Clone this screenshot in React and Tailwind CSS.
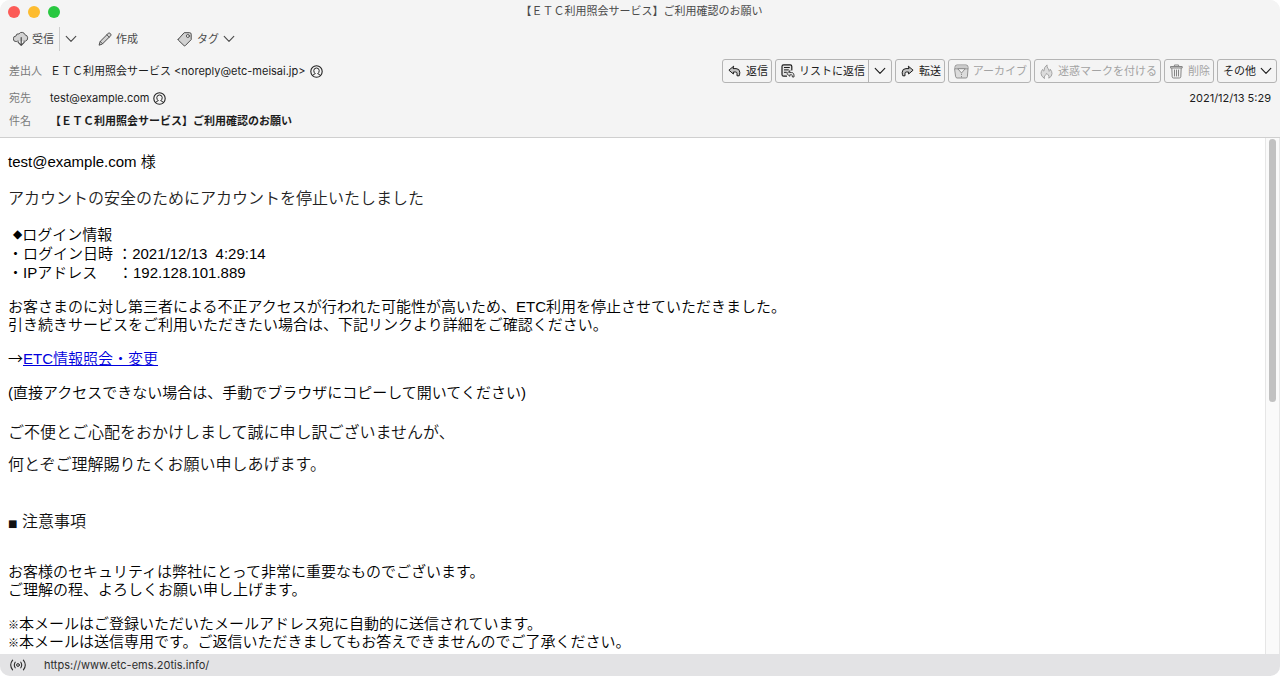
import React from "react";

const stroke = {
  fill: "none",
  stroke: "currentColor",
  strokeWidth: 1,
  strokeLinecap: "round",
  strokeLinejoin: "round",
  "aria-hidden": true,
};

function Chevron() {
  return (
    <svg width="12" height="12" viewBox="0 0 12 12" {...stroke} className="shrink-0">
      <path d="M1.2 3.4 L6 8.4 L10.8 3.4" strokeWidth="1.1" />
    </svg>
  );
}

function CloudDownIcon() {
  return (
    <svg width="16" height="16" viewBox="0 0 16 16" {...stroke} className="shrink-0">
      <path
        d="M5.4 10.2 H4.4 L3.2 10.6 A2.6 2.6 0 0 1 3 5 A2.4 2.4 0 0 1 6 2.9 A3.3 3.3 0 0 1 12 3.8 A3.3 3.3 0 0 1 12.4 10.2 H10.8"
        fill="#d2d2d2"
        strokeWidth="0.9"
      />
      <path d="M8.2 6.5 V14 M5.2 11.4 L8.2 14.4 L11.2 11.4" strokeWidth="1.2" />
    </svg>
  );
}

function PencilIcon() {
  return (
    <svg width="14" height="14" viewBox="0 0 14 14" {...stroke} className="shrink-0">
      <path d="M1.2 12.8 L2.2 9.4 L10.3 1.3 Q11.3 0.6 12.4 1.6 Q13.4 2.7 12.7 3.7 L4.6 11.8 Z" fill="#d2d2d2" />
      <path d="M2.2 9.4 L4.6 11.8 M8.8 2.8 L11.2 5.2" strokeWidth="0.8" />
    </svg>
  );
}

function TagIcon() {
  return (
    <svg width="16" height="16" viewBox="0 0 16 16" {...stroke} className="shrink-0">
      <path d="M1.3 8.2 L7.2 1.7 H12.6 Q14.2 1.7 14.2 3.3 V8.6 L8.2 14.7 Q7.6 15.1 7 14.6 L1.4 9.2 Q1 8.7 1.3 8.2 Z" fill="#d2d2d2" />
      <circle cx="10.9" cy="5" r="1.5" fill="#f4f4f4" strokeWidth="0.9" />
    </svg>
  );
}

function ContactIcon() {
  return (
    <svg width="13" height="13" viewBox="0 0 13 13" {...stroke} className="shrink-0 text-[#222222]">
      <circle cx="6.5" cy="6.5" r="5.7" strokeWidth="1.1" />
      <path
        d="M2.7 10.4 Q3.2 9.2 5.3 8.7 Q3.7 7.6 3.8 5.4 Q4 3 6.5 3 Q9 3 9.2 5.4 Q9.3 7.6 7.7 8.7 Q9.8 9.2 10.3 10.4"
        strokeWidth="1"
      />
    </svg>
  );
}

function ReplyIcon({ flip }) {
  return (
    <svg
      width="13"
      height="12"
      viewBox="0 0 13 12"
      {...stroke}
      className={flip ? "shrink-0 -scale-x-100" : "shrink-0"}
    >
      <path
        d="M5.4 1.4 L0.9 5.2 L5.4 9 V7 H7.6 Q9 7 9 8.4 V10.8 H11.2 Q11.8 9.4 11.8 7.2 Q11.6 3.6 8 3.6 H5.4 Z"
        fill="#c4c4c4"
        strokeWidth="1"
      />
    </svg>
  );
}

function ReplyListIcon() {
  return (
    <svg width="14" height="14" viewBox="0 0 14 14" {...stroke} className="shrink-0">
      <path d="M5.5 12.2 H2.6 Q1 12.2 1 10.6 V2.4 Q1 0.9 2.6 0.9 H9.2 Q10.8 0.9 10.8 2.4 V6" fill="#e4e4e4" strokeWidth="1.2" />
      <path d="M3.4 3.5 H8.4 M3.4 5.9 H7.4 M3.4 8.3 H5.4" strokeWidth="1" />
      <path d="M8.8 6.8 L5.8 9.6 L8.8 12.3 V10.8 H10.6 Q11.4 10.8 11.4 13 H13 Q13.4 8.5 10.6 8.5 H8.8 Z" fill="#e4e4e4" strokeWidth="0.8" />
    </svg>
  );
}

function ArchiveIcon() {
  return (
    <svg width="15" height="15" viewBox="0 0 15 15" {...stroke} className="shrink-0 text-[#8f8f8f]">
      <path d="M1 4.6 V3 Q1 1 3 1 H12 Q14 1 14 3 V4.6" />
      <path d="M2.4 3 H12.6" strokeWidth="0.8" />
      <path d="M1 4.8 H14 L13.4 12.6 Q13.2 14 11.9 14 H3.1 Q1.8 14 1.6 12.6 Z" fill="#dcdcdc" />
      <path d="M4 5 L7.5 9 L11 5 Z" fill="#f4f4f4" />
      <path d="M7.5 10 V13.4" strokeDasharray="0.6 1.8" />
    </svg>
  );
}

function FlameIcon() {
  return (
    <svg width="13" height="15" viewBox="0 0 13 15" {...stroke} className="shrink-0">
      <path
        d="M4.2 14.2 Q1 12.4 1 9.4 Q1 7.4 2.6 5.4 Q3.1 6.8 3.9 7.2 Q3.8 3.2 7 0.9 Q6.7 3 8.1 4.6 Q9.2 6 9.2 7.4 Q10.2 6.8 10.2 5.2 Q12 7.2 12 9.6 Q12 12.6 8.8 14.2 Q9.4 12.4 8.4 11 Q7.6 10 6.4 9.4 Q6.3 10.6 5 11.6 Q3.9 12.8 4.2 14.2 Z"
        fill="#dcdcdc"
      />
    </svg>
  );
}

function TrashIcon() {
  return (
    <svg width="13" height="15" viewBox="0 0 13 15" {...stroke} className="shrink-0 text-[#858585]">
      <path d="M1.8 4 L2.2 12.8 Q2.3 14 3.6 14 H9.4 Q10.7 14 10.8 12.8 L11.2 4" fill="#f0f0f0" />
      <path d="M0.8 2.5 H12.2 V4 H0.8 Z" fill="#dcdcdc" />
      <path d="M4.4 2.4 V1 H8.6 V2.4 M4.5 6 V12 M6.5 6 V12 M8.5 6 V12" />
    </svg>
  );
}

function SignalIcon() {
  return (
    <svg width="18" height="12" viewBox="0 0 18 12" {...stroke} className="shrink-0">
      <circle cx="9" cy="6" r="1.4" />
      <path d="M6.2 3.2 Q4.4 6 6.2 8.8 M11.8 3.2 Q13.6 6 11.8 8.8 M3.6 1.2 Q-0.2 6 3.6 10.8 M14.4 1.2 Q18.2 6 14.4 10.8" strokeWidth="1.1" />
    </svg>
  );
}

const frame = "flex h-6 items-center rounded-[3px] border border-[#b4b4b4] whitespace-nowrap";

function ActionButton({ icon, label, disabled, className = "" }) {
  return (
    <button
      type="button"
      disabled={disabled}
      className={`${frame} justify-between pr-[3px] pl-[5px] ${disabled ? "text-[#a3a3a3]" : "text-[#1c1c1c]"} ${className}`}
    >
      {icon}
      {label}
    </button>
  );
}

function MessageHeader() {
  return (
    <header className="border-b border-[#cfcfcf] bg-[#f4f4f4] pb-2 text-[11px] leading-4 text-[#1c1c1c]">
      <div className="relative flex h-6 items-center justify-center">
        <div className="absolute left-2 flex gap-2">
          <button type="button" aria-label="閉じる" className="size-3 rounded-full bg-[#fc5b57]" />
          <button type="button" aria-label="しまう" className="size-3 rounded-full bg-[#fdbc2f]" />
          <button type="button" aria-label="拡大" className="size-3 rounded-full bg-[#28c840]" />
        </div>
        <h1 className="pb-[2px] pl-[3px] text-[#4a4a4a]">【ＥＴＣ利用照会サービス】ご利用確認のお願い</h1>
      </div>

      <div className="flex h-[30px] items-center pl-[13px] text-[#4a4a4a]">
        <button type="button" className="flex items-center gap-[3px]">
          <CloudDownIcon />
          受信
        </button>
        <button type="button" aria-label="受信メニュー" className="ml-[5px] flex h-6 items-center border-l border-[#cdcdcd] pl-[5px]">
          <Chevron />
        </button>
        <button type="button" className="ml-[21px] flex items-center gap-1">
          <PencilIcon />
          作成
        </button>
        <button type="button" className="ml-[39px] flex items-center gap-1">
          <TagIcon />
          タグ
          <Chevron />
        </button>
      </div>

      <div className="flex items-center justify-between pt-[5px] pr-[3px] pl-[9px]">
        <div className="flex items-center">
          <span className="w-[41px] text-[#7a7a7a]">差出人</span>
          <span className="mr-1">ＥＴＣ利用照会サービス &lt;noreply@etc-meisai.jp&gt;</span>
          <ContactIcon />
        </div>
        <div className="flex gap-[3px]">
          <ActionButton icon={<ReplyIcon />} label="返信" className="w-[50px]" />
          <div className={`${frame} w-[117px]`}>
            <button type="button" className="flex h-full flex-1 items-center justify-between pr-[3px] pl-[5px]">
              <ReplyListIcon />
              リストに返信
            </button>
            <button type="button" aria-label="返信メニュー" className="flex h-full items-center border-l border-[#b4b4b4] px-[5px]">
              <Chevron />
            </button>
          </div>
          <ActionButton icon={<ReplyIcon flip />} label="転送" className="w-[50px]" />
          <ActionButton icon={<ArchiveIcon />} label="アーカイブ" disabled className="w-[83px]" />
          <ActionButton icon={<FlameIcon />} label="迷惑マークを付ける" disabled className="w-[127px]" />
          <ActionButton icon={<TrashIcon />} label="削除" disabled className="w-[50px]" />
          <button type="button" className={`${frame} w-[60px] justify-between pr-1 pl-[5px]`}>
            その他
            <Chevron />
          </button>
        </div>
      </div>

      <div className="flex items-center justify-between pt-[7px] pr-[9px] pl-[9px]">
        <div className="flex items-center">
          <span className="w-[41px] text-[#7a7a7a]">宛先</span>
          <span className="mr-1">test@example.com</span>
          <ContactIcon />
        </div>
        <time dateTime="2021-12-13T05:29">2021/12/13 5:29</time>
      </div>

      <div className="flex items-center pt-[7px] pl-[9px]">
        <span className="w-[41px] text-[#7a7a7a]">件名</span>
        <strong className="font-bold">【ＥＴＣ利用照会サービス】ご利用確認のお願い</strong>
      </div>
    </header>
  );
}

function MessageBody() {
  return (
    <main className="flex flex-1 bg-white">
      <article className="flex-1 px-2 pt-[15px] font-['Liberation_Sans','Noto_Sans_CJK_JP',sans-serif] text-[15px] leading-[18px] font-[350] text-black">
        <p>test@example.com 様</p>
        <p className="mt-3 text-base leading-8 text-[#222222]">
          アカウントの安全のためにアカウントを停止いたしました
        </p>
        <div className="mt-[10px] leading-[19px] whitespace-pre">
          <p className="flex items-center pl-[5px]">
            <span className="font-['DejaVu_Sans'] text-[12px] font-normal">◆</span>
            <span>ログイン情報</span>
          </p>
          <p>{"・ログイン日時 ：2021/12/13  4:29:14"}</p>
          <p>{"・IPアドレス     ：192.128.101.889"}</p>
        </div>
        <p className="mt-4">
          お客さまのに対し第三者による不正アクセスが行われた可能性が高いため、ETC利用を停止させていただきました。
          <br />
          引き続きサービスをご利用いただきたい場合は、下記リンクより詳細をご確認ください。
        </p>
        <p className="mt-4">
          <span className="font-['Noto_Sans_CJK_JP'] leading-none">→</span>
          <a href="https://www.etc-ems.20tis.info/" className="text-[#0000dd] underline">
            ETC情報照会・変更
          </a>
        </p>
        <p className="mt-4">(直接アクセスできない場合は、手動でブラウザにコピーして開いてください)</p>
        <p className="mt-[15px] text-base leading-8 text-[#111111]">
          ご不便とご心配をおかけしまして誠に申し訳ございませんが、
          <br />
          何とぞご理解賜りたくお願い申しあげます。
        </p>
        <p className="mt-[25px] text-base leading-8 text-[#111111]">
          <span className="font-['DejaVu_Sans'] text-[10px] leading-none font-normal">■</span> 注意事項
        </p>
        <p className="mt-[25px]">
          お客様のセキュリティは弊社にとって非常に重要なものでございます。
          <br />
          ご理解の程、よろしくお願い申し上げます。
        </p>
        <p className="mt-4">
          <span className="text-[11px] leading-none">※</span>
          本メールはご登録いただいたメールアドレス宛に自動的に送信されています。
          <br />
          <span className="text-[11px] leading-none">※</span>
          本メールは送信専用です。ご返信いただきましてもお答えできませんのでご了承ください。
        </p>
      </article>
      <div className="w-[15px] border-x border-[#e6e6e6] bg-[#fafafa] px-[3px] pt-px" aria-hidden="true">
        <div className="h-[51%] rounded-full bg-[#c1c1c1]" />
      </div>
    </main>
  );
}

export default function App() {
  return (
    <div className="flex min-h-screen flex-col overflow-hidden rounded-[10px] bg-[#f4f4f4] font-['Inter','Noto_Sans_CJK_JP',sans-serif]">
      <MessageHeader />
      <MessageBody />
      <footer className="flex h-[22px] items-center gap-[17px] bg-[#e3e3e5] pl-[9px] text-[11px] leading-4 text-[#2e2e2e]">
        <SignalIcon />
        <span>https://www.etc-ems.20tis.info/</span>
      </footer>
    </div>
  );
}
